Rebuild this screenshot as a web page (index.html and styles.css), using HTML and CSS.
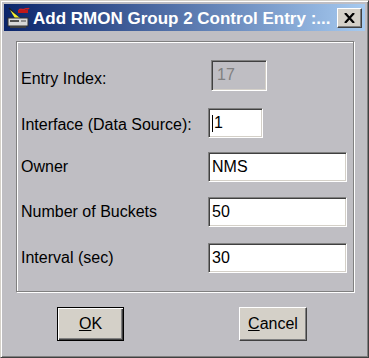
FILE: index.html
```html
<!DOCTYPE html>
<html>
<head>
<meta charset="utf-8">
<link rel="stylesheet" href="styles.css">
</head>
<body>
<div class="window">
  <div class="titlebar">
    <svg class="app-icon" width="24" height="24" viewBox="0 0 24 24">
      <path d="M3 2 L12 11" stroke="#202020" stroke-width="1.5"/>
      <path d="M4 4 L14 12 L10 14 Z" fill="#f4ee30"/>
      <path d="M13 4 C15 2 17 5 19 3 C20 2 22 4 23 2" stroke="#d02020" stroke-width="1.6" fill="none"/>
      <rect x="12" y="4" width="10" height="3" fill="#c01818"/>
      <rect x="2" y="12" width="20" height="8" fill="#d8d8d8" stroke="#303030" stroke-width="1"/>
      <rect x="4" y="14" width="9" height="2" fill="#505050"/>
      <rect x="15" y="14" width="5" height="2" fill="#909090"/>
      <rect x="4" y="20" width="16" height="2" fill="#404040"/>
    </svg>
    <span class="title">Add RMON Group 2 Control Entry :...</span>
    <div class="close">
      <svg width="11" height="10" viewBox="0 0 11 10"><path d="M1 0 L10 10 M10 0 L1 10" stroke="#000" stroke-width="2.2"/></svg>
    </div>
  </div>
  <div class="content">
    <div class="group">
      <div class="row">
        <span class="label label-low">Entry Index:</span>
        <div class="field field-disabled field-index">17</div>
      </div>
      <div class="row row-2">
        <span class="label label-mid">Interface (Data Source):</span>
        <div class="field field-short"><span class="caret"></span>1</div>
      </div>
      <div class="row row-3">
        <span class="label">Owner</span>
        <div class="field">NMS</div>
      </div>
      <div class="row row-4">
        <span class="label">Number of Buckets</span>
        <div class="field">50</div>
      </div>
      <div class="row row-5">
        <span class="label">Interval (sec)</span>
        <div class="field">30</div>
      </div>
    </div>
    <div class="buttons">
      <button class="btn btn-default"><u>O</u>K</button>
      <button class="btn btn-cancel"><u>C</u>ancel</button>
    </div>
  </div>
</div>
</body>
</html>
```
FILE: styles.css
```css
html, body {
  margin: 0;
  padding: 0;
}
body {
  width: 369px;
  height: 358px;
  overflow: hidden;
  font-family: "Liberation Sans", Arial, sans-serif;
  font-size: 16px;
  color: #000;
}
.window {
  box-sizing: border-box;
  width: 369px;
  height: 358px;
  background: #bfbec3;
  border: 1px solid;
  border-color: #d4d0c8 #404040 #404040 #d4d0c8;
  box-shadow: inset 1px 1px 0 #fff, inset -1px -1px 0 #808080;
  padding: 3px;
  display: flex;
  flex-direction: column;
}
.titlebar {
  height: 27px;
  flex: none;
  background: linear-gradient(to right, #0a246a, #a6caf0);
  display: flex;
  align-items: center;
  padding: 0 3px 0 2px;
}
.app-icon {
  flex: none;
  display: block;
}
.title {
  flex: 1;
  color: #fff;
  font-weight: bold;
  font-size: 17px;
  margin-left: 3px;
  white-space: nowrap;
  padding-top: 2px;
}
.close {
  box-sizing: border-box;
  width: 25px;
  height: 20px;
  flex: none;
  background: #d4d0c8;
  border: 1px solid;
  border-color: #fff #404040 #404040 #fff;
  box-shadow: inset -1px -1px 0 #808080;
  display: flex;
  align-items: center;
  justify-content: center;
}
.close svg {
  display: block;
}
.content {
  padding: 10px 11px 0 12px;
}
.group {
  box-sizing: border-box;
  height: 251px;
  border: 1px solid #808080;
  box-shadow: inset 1px 1px 0 #fff, 1px 1px 0 #fff;
  padding: 19px 0 0 4px;
}
.row {
  display: flex;
  align-items: center;
  height: 30px;
}
.row-2 { margin-top: 17px; }
.row-3 { margin-top: 14px; }
.row-4 { margin-top: 15px; }
.row-5 { margin-top: 16px; }
.label {
  width: 187px;
  flex: none;
  white-space: nowrap;
}
.label-low { padding-top: 6px; }
.label-mid { padding-top: 3px; }
.field {
  box-sizing: border-box;
  height: 30px;
  width: 139px;
  background: #fff;
  border: 1px solid;
  border-color: #808080 #fff #fff #808080;
  box-shadow: inset 1px 1px 0 #404040, inset -1px -1px 0 #d4d0c8;
  padding-left: 3px;
  line-height: 28px;
  display: flex;
  align-items: center;
}
.field-index {
  width: 56px;
  height: 31px;
  margin-left: 3px;
  margin-top: -2px;
}
.field-short {
  width: 55px;
}
.field-disabled {
  background: #bfbec3;
  color: #808080;
  padding-left: 5px;
}
.caret {
  display: inline-block;
  width: 1px;
  height: 17px;
  background: #000;
  margin-right: 1px;
}
.buttons {
  display: flex;
  margin-top: 15px;
  padding-left: 41px;
  gap: 115px;
}
.btn {
  box-sizing: border-box;
  height: 34px;
  background: #d4d0c8;
  font-family: "Liberation Sans", Arial, sans-serif;
  font-size: 16px;
  color: #000;
  padding: 0;
  margin: 0;
}
.btn-default {
  width: 67px;
  border: 1px solid #000;
  box-shadow: inset 1px 1px 0 #fff, inset -1px -1px 0 #404040, inset -2px -2px 0 #808080;
}
.btn-cancel {
  width: 68px;
  border: 1px solid;
  border-color: #fff #404040 #404040 #fff;
  box-shadow: inset -1px -1px 0 #808080;
}
```
